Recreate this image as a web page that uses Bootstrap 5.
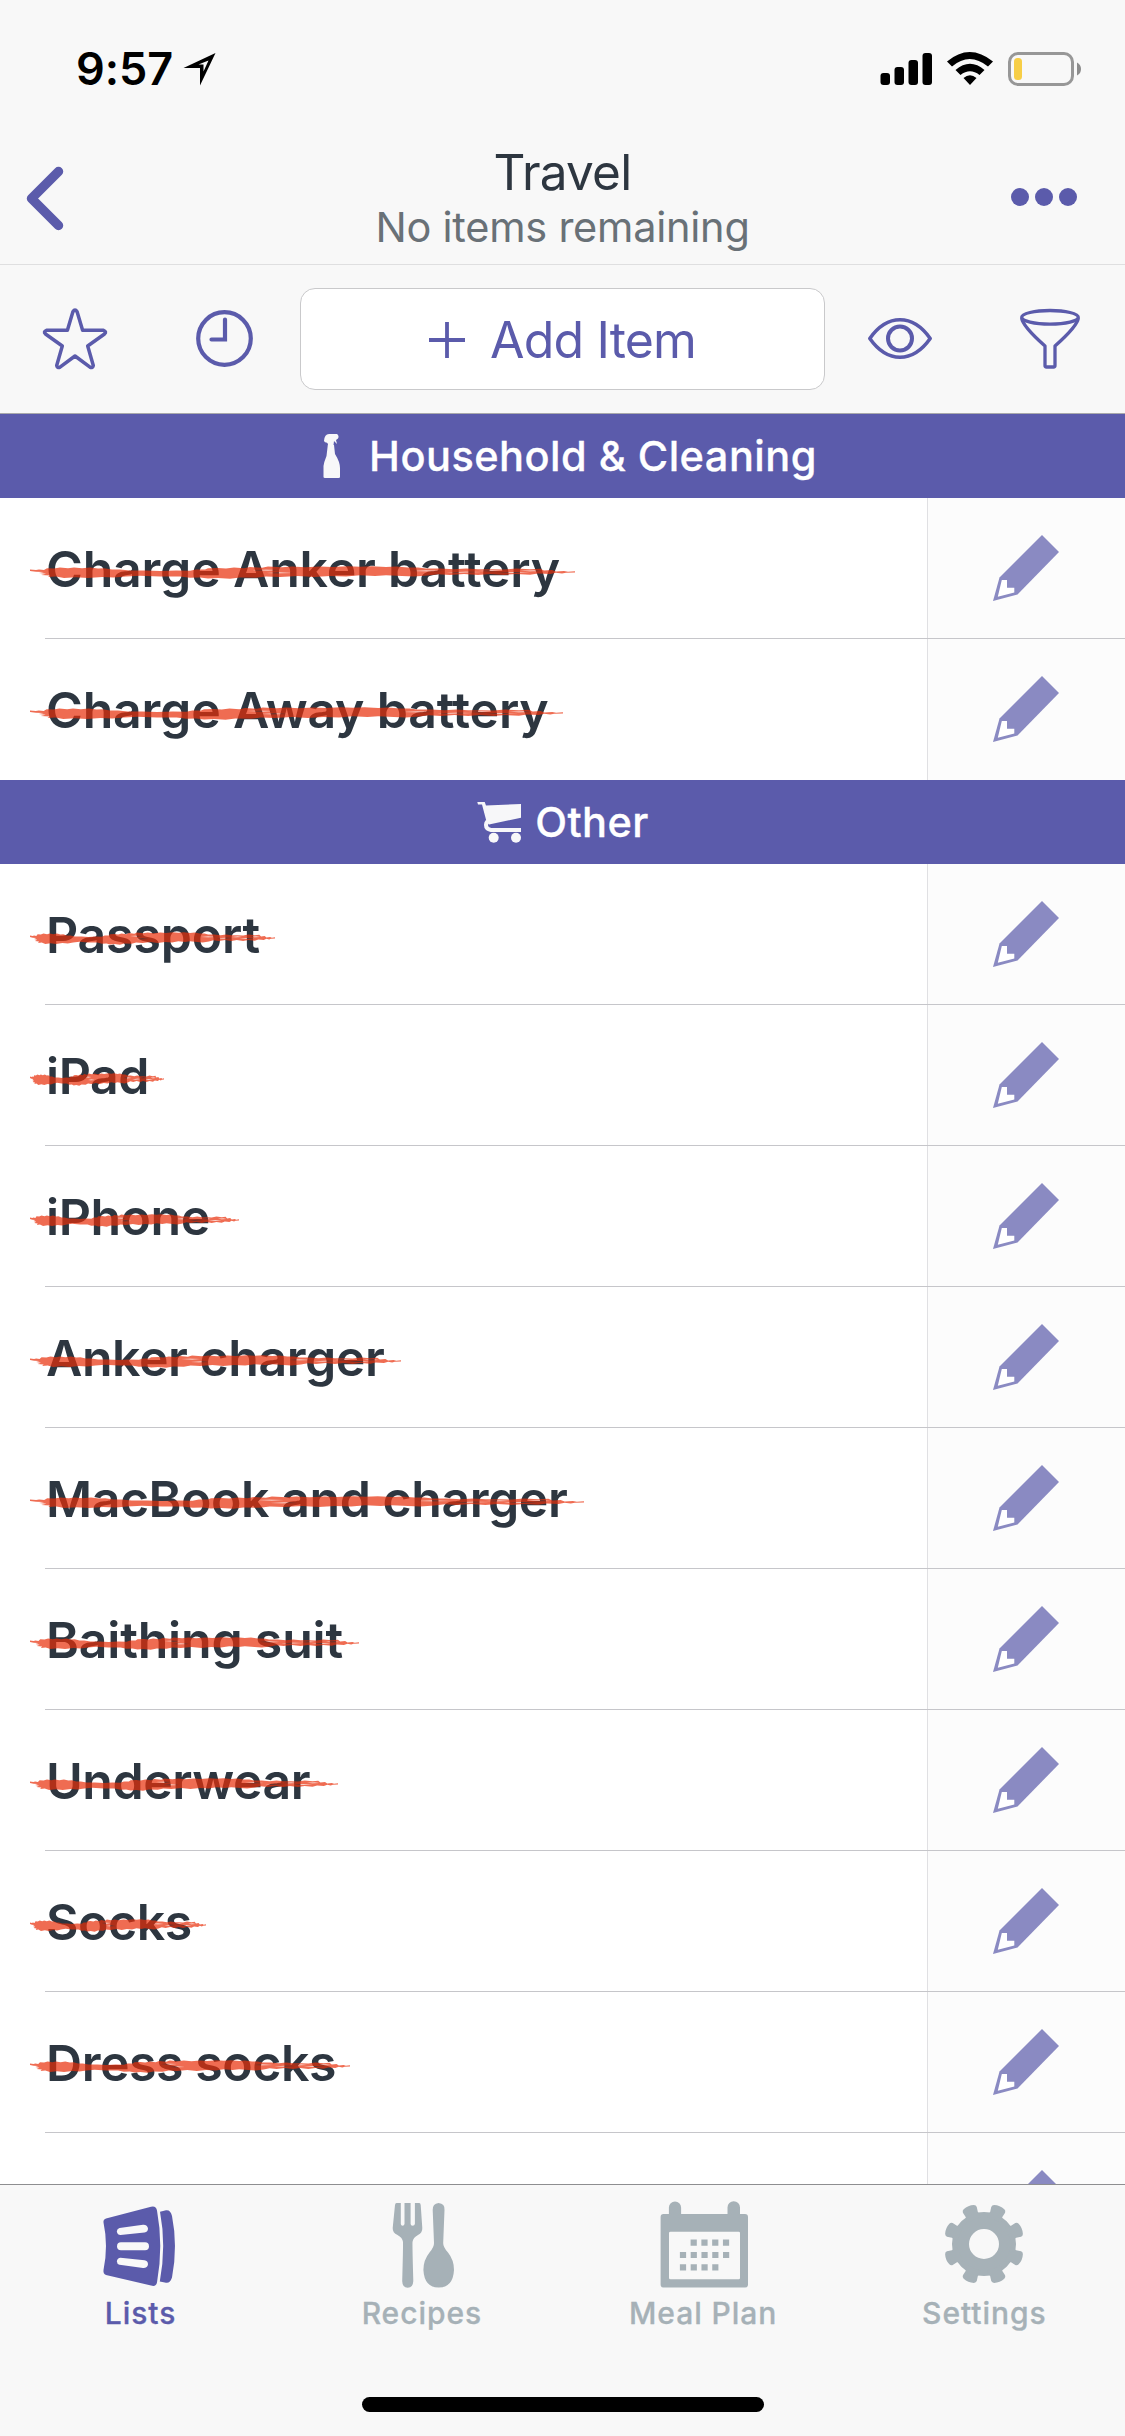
<!DOCTYPE html>
<html lang="en">
<head>
<meta charset="utf-8">
<meta name="viewport" content="width=device-width, initial-scale=1">
<title>Travel</title>
<link href="https://cdn.jsdelivr.net/npm/bootstrap@5.3.0/dist/css/bootstrap.min.css" rel="stylesheet">
<style>
  :root { --brand: #5b5bab; --bar: #f8f8f8; --ink: #2d3640; --idle: #a6b1b7; }
  body { width: 1125px; height: 2436px; overflow: hidden; background: #fff; color: var(--ink); font-family: Inter, "Liberation Sans", sans-serif; }
  svg { display: block; flex: none; overflow: visible; }
  .app-bar { background: var(--bar); }
  .status-row { height: 130px; padding: 7px 44px 0 76px; color: #000; }
  .clock-text { font-size: 45px; font-weight: 600; line-height: 60px; letter-spacing: -.1px; }
  .title-row { height: 135px; border-bottom: 1px solid #dfdfe0; padding: 0 48px 0 21px; }
  .title-side { width: 100px; }
  .title-mid { margin-left: 27px; }
  .list-title { font-size: 49.5px; line-height: 60px; letter-spacing: -.8px; }
  .list-sub { font-size: 41.5px; line-height: 50px; letter-spacing: -.24px; color: #697177; }
  .tool-row { height: 149px; border-bottom: 1px solid #a9a9ab; color: var(--brand); }
  .tool-cell { width: 150px; }
  .btn-add { width: 525px; height: 102px; border: 1px solid #c9c9cb; border-radius: 15px; background: #fff; color: var(--brand); font-size: 50px; letter-spacing: -.85px; line-height: 60px; gap: 25px; padding: 1px 0 0; }
  .list-body { min-height: 0; flex: 1 1 0; }
  .section-head { height: 84px; background: var(--brand); color: #fff; font-size: 41.5px; font-weight: 500; letter-spacing: .47px; -webkit-text-stroke: .3px #fff; }
  .icon-spray { margin-left: 1px; margin-right: 15px; }
  .icon-cart { margin-right: 13px; }
  .entry { height: 141px; font-size: 50px; font-weight: 600; letter-spacing: -.2px; line-height: 60px; }
  .entry.snug { letter-spacing: -.45px; }
  .entry-rule::after { content: ""; position: absolute; left: 45px; right: 0; bottom: 0; height: 1px; background: #c6c6ca; }
  .entry-name { padding-left: 46px; }
  .entry-edit { width: 198px; border-left: 1px solid #e0e0e3; background: #fcfcfc; padding: 0 0 1px 65px; }
  .scribble { position: absolute; left: 30px; top: 62px; }
  .tab-bar { height: 252px; border-top: 1px solid #8e8e90; background: var(--bar); color: var(--idle); }
  .tab-item { padding-top: 15px; font-size: 30px; font-weight: 500; -webkit-text-stroke: .3px currentColor; line-height: 36px; letter-spacing: .95px; gap: 5px; color: var(--idle); }
  .tab-item.current { color: var(--brand); }
  .home-pill { width: 402px; height: 15px; border-radius: 8px; background: #000; margin-bottom: 24px; }
</style>
<script src="https://cdn.jsdelivr.net/npm/bootstrap@5.3.0/dist/js/bootstrap.bundle.min.js"></script>
</head>
<body class="d-flex flex-column">

<svg width="0" height="0" class="position-absolute" aria-hidden="true">
  <symbol id="pencil" viewBox="0 0 66 66">
    <path fill="#8a8ac2" d="M49 0 66 17 24.500 59.500 0 66 6.500 42.500Z"/>
    <path fill="#fff" d="M8.800 45H14V52.700H21.300V57.500L4.800 61.700Z"/>
  </symbol>
  <symbol id="scribble" viewBox="0 0 545 24" preserveAspectRatio="none">
    <path fill="#e82e08" fill-opacity=".7" fill-rule="evenodd" d="M0 9.600 6 10 9 9.400 14 10 17 8.200 24 8.600 30 7.600 38 8.300 44 7.500 52 8.200 60 7.600 68 8.600 74 8.200 82 9.600 90 9.400 100 10.600 115 10.400 130 11.100 146 10.500 160 10.800 166 9.400 175 9.600 178 8.300 188 8 196 8.600 204 7.400 214 8.200 220 7 232 7.800 238 6.600 252 7.200 262 6.500 275 7.200 290 6.600 302 6.900 318 6.200 330 6.800 342 6.200 356 7 366 6.400 378 7.600 388 7.400 396 8.600 410 8.400 424 9.200 436 8.400 448 9.300 462 9.200 474 9.600 486 8.600 500 9.200 510 8.800 514 10.400 522 10 526 11.500 534 11.100 538 11.700 545 11.300 545 12.400 536 12.800 532 13.500 526 12.700 520 14 508 13.600 500 14.700 486 14 474 14.900 460 14.100 448 15 434 14 420 14.900 408 14.300 398 15.600 384 16.600 372 16 356 15.300 345 16 330 15.300 316 16.600 300 16 284 16.900 268 16 250 17 236 16.600 226 17.800 210 17.600 200 18.800 188 18 178 18.500 170 17.400 160 17.800 150 16.400 130 16.600 110 15.800 96 16.400 84 17.500 72 16.900 58 18 46 17.200 34 17.900 26 16.600 18 17 20 15.600 11 15 16 13.800 9 13 14 12.100 6 11.800 0 11Z
    M222 10.100 236 9.700 250 10 238 10.400Z M236 13 250 12.600 264 12.900 248 13.300Z M380 11 396 10.600 414 11 396 11.300Z M416 12.200 436 11.800 452 12.100 430 12.500Z M448 10.900 462 10.600 472 10.900 458 11.300Z M466 12.500 484 12.100 500 12.400 480 12.800Z M490 10.800 504 10.500 512 10.900 500 11.200Z"/>
  </symbol>
</svg>

<header class="app-bar flex-shrink-0">
  <div class="status-row d-flex align-items-center">
    <span class="clock-text">9:57</span>
    <svg class="ms-2" width="36" height="36" viewBox="180 54 36 36"><path fill-rule="evenodd" d="M214.500 56 182.500 71H199V88.500ZM207.500 63.500 202.500 74.500V67.600H197.500Z"/></svg>
    <svg class="ms-auto" width="202" height="36" viewBox="879 51 202 36">
      <rect x="880.500" y="73" width="9.500" height="12" rx="3"/><rect x="894.500" y="67" width="9.500" height="18" rx="3"/><rect x="908.500" y="60" width="9.500" height="25" rx="3"/><rect x="922.500" y="53" width="9.500" height="32" rx="3"/>
      <path d="M947 61.500Q969.500 42.500 993 61.500L988 66.500Q969.500 51.500 952 66.500ZM955.500 70Q970 57.500 984.500 70L979.500 75Q970 67.500 960.500 75ZM963.500 78Q970 72.500 976.500 78L970 85Z"/>
      <rect x="1009.500" y="53.500" width="63" height="31" rx="8.500" fill="none" stroke="#979797" stroke-width="3"/>
      <rect x="1014" y="58" width="8" height="22" rx="3.500" fill="#f7ce46"/>
      <path fill="#8c8c8c" d="M1077 62.500Q1081 64.500 1081 69T1077 75.500Z"/>
    </svg>
  </div>
  <div class="title-row d-flex align-items-center justify-content-between">
    <div class="title-side"><svg width="46" height="70" viewBox="21 162 46 70"><path d="M58.500 171.500 31.500 198.500 58.500 225.500" fill="none" stroke="#5b5bab" stroke-width="9.500" stroke-linecap="round" stroke-linejoin="round"/></svg></div>
    <div class="title-mid text-center">
      <div class="list-title">Travel</div>
      <div class="list-sub">No items remaining</div>
    </div>
    <div class="title-side d-flex justify-content-end"><svg width="66" height="18" fill="#5b5bab"><circle cx="9" cy="9" r="9"/><circle cx="33" cy="9" r="9"/><circle cx="57" cy="9" r="9"/></svg></div>
  </div>
  <div class="tool-row d-flex align-items-center">
    <div class="tool-cell d-flex justify-content-center"><svg width="70" height="70" fill="none" stroke="currentColor" stroke-width="3.500" stroke-linejoin="round"><path d="M32.900 7.700Q35 4.500 37.100 7.700L42.600 26.300H63.500Q67 27.700 64.500 30L47.700 42 53.300 61.500Q52.500 64.500 50 63.200L35 52 20 63.200Q17.500 64.500 16.700 61.500L22.300 42 5.500 30Q3 27.700 6.500 26.300H27.400Z"/></svg></div>
    <div class="tool-cell d-flex justify-content-center"><svg width="70" height="70" fill="none" stroke="currentColor" stroke-width="4.200" stroke-linecap="round"><circle cx="34.500" cy="34.500" r="26.300"/><path d="M35 15.500V35.500H21.500"/></svg></div>
    <button class="btn btn-add d-flex align-items-center justify-content-center"><svg width="36" height="36"><path d="M18 0V36M0 18H36" stroke="currentColor" stroke-width="3.800"/></svg>Add Item</button>
    <div class="tool-cell d-flex justify-content-center"><svg width="70" height="70" fill="none" stroke="currentColor" stroke-width="3.600" stroke-linejoin="round"><path d="M4.800 34.500Q18 15.800 35 15.800T65.200 34.500Q52 53.200 35 53.200T4.800 34.500Z"/><circle cx="35" cy="34.500" r="12" stroke-width="4"/></svg></div>
    <div class="tool-cell d-flex justify-content-center"><svg width="70" height="70" fill="none" stroke="currentColor" stroke-width="3.300" stroke-linejoin="round"><ellipse cx="35" cy="13.300" rx="28.300" ry="6.800"/><path d="M6.700 14Q7.500 22 30 42V61.500Q30 63 31.500 63H38.500Q40 63 40 61.500V42Q62.500 22 63.300 14"/></svg></div>
  </div>
</header>

<main class="list-body overflow-hidden">
  <div class="section-head d-flex align-items-center justify-content-center">
    <svg class="icon-spray" width="45" height="44" fill="#f7f7f9"><path d="M15 7Q15.500 0 20 0H28Q30.500 2 29 4.500L27 6 28 10 25 7 24.500 11H19Q19 8.500 16 8.300ZM18.800 11H25L26 20Q31 28 31 34V43Q31 44 29.500 44H16Q14.500 44 14.500 43V32Q15 28 17.500 22Z"/></svg>
    <span>Household &amp; Cleaning</span>
  </div>
  <div class="entry entry-rule position-relative d-flex"><div class="entry-name flex-grow-1 d-flex align-items-center">Charge Anker battery</div><div class="entry-edit d-flex align-items-center"><svg width="66" height="66"><use href="#pencil"/></svg></div><svg class="scribble" width="545" height="24"><use href="#scribble"/></svg></div>
  <div class="entry position-relative d-flex"><div class="entry-name flex-grow-1 d-flex align-items-center">Charge Away battery</div><div class="entry-edit d-flex align-items-center"><svg width="66" height="66"><use href="#pencil"/></svg></div><svg class="scribble" width="533" height="24"><use href="#scribble"/></svg></div>

  <div class="section-head d-flex align-items-center justify-content-center">
    <svg class="icon-cart" width="46" height="44" fill="#f7f7f9"><path d="M1.300 2H8.700L10 5.500 45 4V17.700L13 24.500 10.500 21.500 6 4.500H2Z"/><path d="M45 30H15Q10 29 10 25T14 21" fill="none" stroke="#f7f7f9" stroke-width="4"/><circle cx="17.700" cy="37.700" r="5"/><circle cx="40" cy="37.700" r="5"/></svg>
    <span>Other</span>
  </div>
  <div class="entry entry-rule position-relative d-flex"><div class="entry-name flex-grow-1 d-flex align-items-center">Passport</div><div class="entry-edit d-flex align-items-center"><svg width="66" height="66"><use href="#pencil"/></svg></div><svg class="scribble" width="245" height="24"><use href="#scribble"/></svg></div>
  <div class="entry snug entry-rule position-relative d-flex"><div class="entry-name flex-grow-1 d-flex align-items-center">iPad</div><div class="entry-edit d-flex align-items-center"><svg width="66" height="66"><use href="#pencil"/></svg></div><svg class="scribble" width="134" height="24"><use href="#scribble"/></svg></div>
  <div class="entry snug entry-rule position-relative d-flex"><div class="entry-name flex-grow-1 d-flex align-items-center">iPhone</div><div class="entry-edit d-flex align-items-center"><svg width="66" height="66"><use href="#pencil"/></svg></div><svg class="scribble" width="209" height="24"><use href="#scribble"/></svg></div>
  <div class="entry snug entry-rule position-relative d-flex"><div class="entry-name flex-grow-1 d-flex align-items-center">Anker charger</div><div class="entry-edit d-flex align-items-center"><svg width="66" height="66"><use href="#pencil"/></svg></div><svg class="scribble" width="371" height="24"><use href="#scribble"/></svg></div>
  <div class="entry snug entry-rule position-relative d-flex"><div class="entry-name flex-grow-1 d-flex align-items-center">MacBook and charger</div><div class="entry-edit d-flex align-items-center"><svg width="66" height="66"><use href="#pencil"/></svg></div><svg class="scribble" width="554" height="24"><use href="#scribble"/></svg></div>
  <div class="entry entry-rule position-relative d-flex"><div class="entry-name flex-grow-1 d-flex align-items-center">Baithing suit</div><div class="entry-edit d-flex align-items-center"><svg width="66" height="66"><use href="#pencil"/></svg></div><svg class="scribble" width="329" height="24"><use href="#scribble"/></svg></div>
  <div class="entry snug entry-rule position-relative d-flex"><div class="entry-name flex-grow-1 d-flex align-items-center">Underwear</div><div class="entry-edit d-flex align-items-center"><svg width="66" height="66"><use href="#pencil"/></svg></div><svg class="scribble" width="308" height="24"><use href="#scribble"/></svg></div>
  <div class="entry snug entry-rule position-relative d-flex"><div class="entry-name flex-grow-1 d-flex align-items-center">Socks</div><div class="entry-edit d-flex align-items-center"><svg width="66" height="66"><use href="#pencil"/></svg></div><svg class="scribble" width="176" height="24"><use href="#scribble"/></svg></div>
  <div class="entry snug entry-rule position-relative d-flex"><div class="entry-name flex-grow-1 d-flex align-items-center">Dress socks</div><div class="entry-edit d-flex align-items-center"><svg width="66" height="66"><use href="#pencil"/></svg></div><svg class="scribble" width="320" height="24"><use href="#scribble"/></svg></div>
  <div class="entry position-relative d-flex"><div class="entry-name flex-grow-1"></div><div class="entry-edit d-flex align-items-center"><svg width="66" height="66"><use href="#pencil"/></svg></div></div>
</main>

<nav class="tab-bar flex-shrink-0 d-flex flex-column justify-content-between align-items-center">
  <div class="nav nav-fill w-100 flex-nowrap">
    <a class="tab-item current col-3 d-flex flex-column align-items-center text-decoration-none" href="#">
      <svg width="90" height="90"><path fill="currentColor" d="M10 18.500 55 6.800Q60 5.500 61 10.500Q67.600 46 61 82.500Q60 87 55 85.500L10 75Q7 74 7.500 70Q12.500 46 7.500 22.500Q7 19.500 10 18.500ZM64 11.800 70 10.200Q74.500 9.500 76 16Q82 46 76 77.500Q74 83.500 70 82.700L63.800 81.500Q70.500 46 64 11.800Z"/><path fill="none" stroke="#f8f8f8" stroke-width="8" stroke-linecap="round" d="M25 46.300H49"/><path fill="#f8f8f8" d="M23.500 28 47 24.700Q51.500 24.500 52 28.500Q52 32 48.500 32.500L24.500 35Q21.500 35 20.800 31.500Q21 28.500 23.500 28ZM23.500 64.700 47 68Q51.500 68.200 52 64.200Q52 60.700 48.500 60.200L24.500 57.700Q21.500 57.700 20.800 61.200Q21 64.200 23.500 64.700Z"/></svg>
      <span>Lists</span></a>
    <a class="tab-item col-3 d-flex flex-column align-items-center text-decoration-none" href="#">
      <svg width="90" height="90" fill="currentColor"><path d="M19.500 3H23.800V24Q24 25.700 25.600 25.700T27.500 24V3H33.600V24Q33.700 25.700 35.600 25.700T37.900 24V3H42.300Q43.500 3 43.700 5L45.300 28Q45.500 33 41 35Q36 37.500 35.500 42Q35.300 46 36.300 81Q36 87.800 30.700 87.800T25.200 81Q26.200 46 26 42Q25.500 37.500 20.500 35Q15.500 33 15.700 28L18 5Q18.300 3 19.500 3Z"/><path d="M61.600 3Q68 3.500 67.500 10L66.200 43Q66 47 71 52.500Q77 60 77 70Q76 87.500 61.700 87.500T46.400 70Q46.400 60 52.500 52.500Q57.200 47 57 43L55.700 10Q55.500 3.500 61.600 3Z"/></svg>
      <span>Recipes</span></a>
    <a class="tab-item col-3 d-flex flex-column align-items-center text-decoration-none" href="#">
      <svg width="90" height="90" fill="currentColor"><path fill-rule="evenodd" d="M5.500 14H10.900V7.500A6.100 6.100 0 0 1 23.100 7.500V14H69.500V7.500A6.200 6.200 0 0 1 82 7.500V14H87Q90 14 90 17V84.500Q90 87.500 87 87.500H5.500Q2.600 87.500 2.600 84.500V17Q2.600 14 5.500 14ZM12.500 31.700Q11 31.700 11 33V78Q11 79.200 12.500 79.200H80.700Q82 79.200 82 78V33Q82 31.700 80.700 31.700Z"/>
      <path fill="none" stroke="currentColor" stroke-width="6.200" stroke-dasharray="6.200 4.580" d="M32.600 42.700H71.200M21.900 55H71.200M21.900 67.300H60.400"/></svg>
      <span>Meal Plan</span></a>
    <a class="tab-item col-3 d-flex flex-column align-items-center text-decoration-none" href="#">
      <svg width="90" height="90" viewBox="-45 -44 90 90" fill="currentColor"><circle r="23.500" fill="none" stroke="currentColor" stroke-width="17"/>
      <g id="teeth"><g id="pair"><path id="tooth" transform="rotate(22.500)" d="M-7.500-26-6.600-32-7.500-37Q-7.500-39-5.500-39.800Q0-41.800 5.500-39.800Q7.500-39 7.500-37L6.600-32 7.500-26Z"/><use href="#tooth" transform="rotate(45)"/></g><use href="#pair" transform="rotate(90)"/></g><use href="#teeth" transform="rotate(180)"/></svg>
      <span>Settings</span></a>
  </div>
  <div class="home-pill"></div>
</nav>
</body>
</html>
